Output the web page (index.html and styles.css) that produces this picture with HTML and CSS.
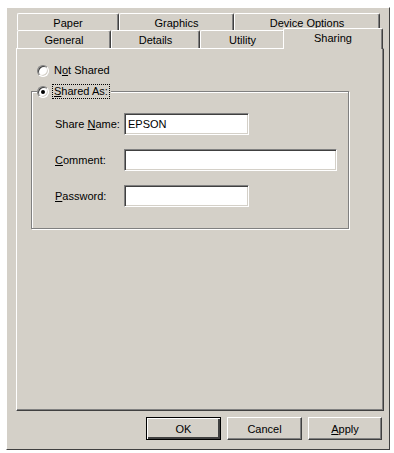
FILE: index.html
```html
<!DOCTYPE html>
<html>
<head>
    <title>Printer Properties</title>
    <link rel="stylesheet" href="styles.css">
</head>
<body>
    <div class="window">
        <div class="tabs">
            <div class="tab-row back">
                <div class="tab t-paper">Paper</div>
                <div class="tab t-graphics">Graphics</div>
                <div class="tab t-device">Device Options</div>
            </div>
            <div class="tab-row front">
                <div class="tab t-general">General</div>
                <div class="tab t-details">Details</div>
                <div class="tab t-utility">Utility</div>
                <div class="tab t-sharing active">Sharing</div>
            </div>
        </div>

        <div class="panel">
            <div class="option">
                <span class="radio"></span>
                <span class="option-text">N<u>o</u>t Shared</span>
            </div>

            <div class="group">
                <div class="legend">
                    <span class="radio checked"></span>
                    <span class="option-text focus"><u>S</u>hared As:</span>
                </div>
                <div class="field">
                    <span class="field-label">Share <u>N</u>ame:</span>
                    <div class="textbox short">EPSON</div>
                </div>
                <div class="field">
                    <span class="field-label"><u>C</u>omment:</span>
                    <div class="textbox long"></div>
                </div>
                <div class="field">
                    <span class="field-label"><u>P</u>assword:</span>
                    <div class="textbox short"></div>
                </div>
            </div>
        </div>

        <div class="buttons">
            <button class="btn default">OK</button>
            <button class="btn">Cancel</button>
            <button class="btn btn-apply"><u>A</u>pply</button>
        </div>
    </div>
</body>
</html>
```

FILE: styles.css
```css
body { margin: 0; background: #fff; font-family: "Liberation Sans", Arial, sans-serif; font-size: 11px; color: #000; }

.window { box-sizing: border-box; width: 384px; height: 443px; margin: 7px 0 0 6px; background: #d4d0c8; border-left: 1px solid #fff; border-top: 1px solid #fff; border-right: 1px solid #404040; border-bottom: 1px solid #404040; }

/* tabs */
.tabs { padding: 5px 0 0 10px; }
.tab-row { display: flex; }
.tab { box-sizing: border-box; overflow: hidden; background: #d4d0c8; border-left: 1px solid #fff; border-top: 1px solid #fff; border-right: 1px solid #404040; box-shadow: inset -1px 0 #808080; border-radius: 2px 2px 0 0; text-align: center; }
.back .tab { height: 17px; line-height: 18px; }
.front .tab { height: 18px; line-height: 19px; }
.t-paper { width: 102px; }
.t-graphics { width: 115px; }
.t-device { width: 146px; }
.t-general { width: 94px; }
.t-details { width: 89px; }
.t-utility { width: 85px; }
.t-sharing { width: 96px; }
.front .tab.active { width: 100px; height: 21px; line-height: 18px; margin: -2px -2px -1px -2px; position: relative; z-index: 1; }

/* panel */
.panel { box-sizing: border-box; width: 368px; height: 363px; margin-left: 9px; border-left: 1px solid #fff; border-top: 1px solid #fff; border-right: 1px solid #404040; border-bottom: 1px solid #404040; box-shadow: inset -1px -1px #808080; padding-top: 15px; }

.option, .legend { display: flex; align-items: center; height: 13px; }
.option { margin-left: 20px; }
.option-text { margin-left: 5px; line-height: 13px; }
.focus { outline: 1px dotted #000; outline-offset: 0; padding: 0 1px; margin-left: 4px; }

.radio { box-sizing: border-box; width: 12px; height: 12px; border-radius: 50%; background: #fff; border: 1px solid; border-color: #808080 #fff #fff #808080; box-shadow: inset 1px 1px #404040, inset -1px -1px #d4d0c8; position: relative; }
.radio.checked::after { content: ""; position: absolute; left: 3px; top: 3px; width: 4px; height: 4px; border-radius: 50%; background: #000; }

/* group box */
.group { box-sizing: border-box; position: relative; width: 318px; height: 138px; margin: 14px 0 0 14px; border: 1px solid #808080; box-shadow: inset 1px 1px #fff, 1px 1px #fff; padding: 21px 0 0 23px; display: flex; flex-direction: column; gap: 14px; }
.legend { position: absolute; left: 5px; top: -7px; background: #d4d0c8; padding-right: 2px; }

.field { display: flex; align-items: center; }
.field-label { width: 69px; }
.textbox { box-sizing: border-box; height: 22px; background: #fff; border: 1px solid; border-color: #808080 #fff #fff #808080; box-shadow: inset 1px 1px #404040, inset -1px -1px #d4d0c8; padding: 0 3px; line-height: 20px; }
.textbox.short { width: 125px; }
.textbox.long { width: 213px; }

/* buttons */
.buttons { display: flex; justify-content: flex-end; gap: 6px; margin: 6px 7px 0 0; }
.btn { box-sizing: border-box; width: 75px; height: 23px; padding: 0; font: inherit; color: #000; background: #d4d0c8; border: 1px solid; border-color: #fff #404040 #404040 #fff; box-shadow: inset -1px -1px #808080; }
.btn-apply { width: 74px; }
.btn.default { border-color: #000; box-shadow: inset 1px 1px #fff, inset -2px -2px #404040, inset -1px -1px #808080; }
```
